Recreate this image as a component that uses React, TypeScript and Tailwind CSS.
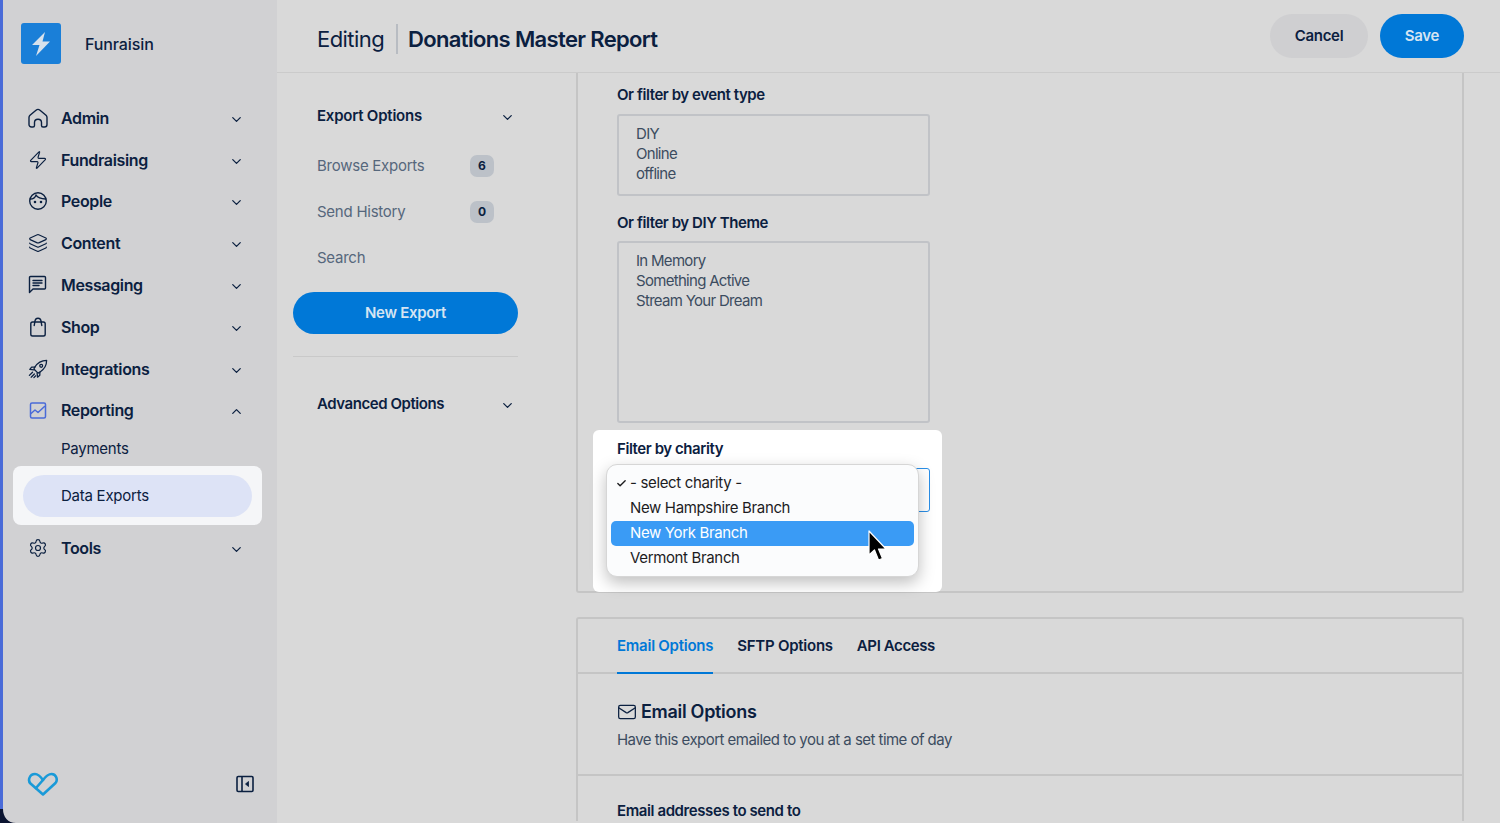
import { Check, ChevronDown, ChevronUp, Layers, Mail, Settings, Zap } from "lucide-react";
import type { ReactNode } from "react";

const HomeIcon = () => (
  <svg width="20" height="20" viewBox="0 0 20 20" fill="none" stroke="currentColor" strokeWidth="1.4" strokeLinejoin="round">
    <path d="M1 9.5C1 8.6 1.4 7.9 2 7.3L8 2.2C9.2 1.2 10.8 1.2 12 2.2L18 7.3C18.6 7.9 19 8.6 19 9.5V16.5C19 18 18 19 16.5 19H15C14 19 13.5 18.4 13.5 17.5V14.5C13.5 12.6 12 11.2 10 11.2C8 11.2 6.5 12.6 6.5 14.5V17.5C6.5 18.4 6 19 5 19H3.5C2 19 1 18 1 16.5V9.5Z" />
  </svg>
);

const FaceIcon = () => (
  <svg width="20" height="20" viewBox="0 0 20 20" fill="none" stroke="currentColor" strokeWidth="1.4" strokeLinecap="round">
    <circle cx="10" cy="10" r="8.3" />
    <path d="M2.4 8C5 8 7 6.8 8 4.2C9.5 6.5 12.5 8 17.6 8" />
    <circle cx="7" cy="11" r="0.6" fill="currentColor" />
    <circle cx="13" cy="11" r="0.6" fill="currentColor" />
  </svg>
);

const MessageIcon = () => (
  <svg width="20" height="20" viewBox="0 0 20 20" fill="none" stroke="currentColor" strokeWidth="1.4" strokeLinejoin="round" strokeLinecap="round">
    <path d="M1.5 2.5C1.5 1.9 1.9 1.5 2.5 1.5H16.5C17.1 1.5 17.5 1.9 17.5 2.5V13C17.5 13.6 17.1 14 16.5 14H5L1.5 17.5V2.5Z" />
    <path d="M5 5.5H14M5 8H14M5 10.5H11" />
  </svg>
);

const BagIcon = () => (
  <svg width="20" height="20" viewBox="0 0 20 20" fill="none" stroke="currentColor" strokeWidth="1.4" strokeLinecap="round">
    <rect x="2.8" y="5" width="14.4" height="14" rx="1.8" />
    <path d="M6.2 8.5C6.2 8 6.6 7 6.8 5C7 2.8 8.2 1.2 10 1.2C11.8 1.2 13 2.8 13.2 5C13.4 7 13.8 8 13.8 8.5" />
  </svg>
);

const RocketIcon = () => (
  <svg width="22" height="22" viewBox="0 0 22 22" fill="none" stroke="currentColor" strokeWidth="1.4" strokeLinecap="round" strokeLinejoin="round">
    <path d="M20.5 1.5C15 1.5 10.5 4 7.5 9L6.5 11L11 15.5L13 14.5C18 11.5 20.5 7 20.5 1.5Z" />
    <circle cx="14.5" cy="7.5" r="1.6" />
    <path d="M7.5 9H4L2 11.5L6.5 12" />
    <path d="M13 14.5V18L10.5 20L10 15.5" />
    <path d="M5 14.5L1.5 18M7 16.5L3.5 20M8.5 18.5L6.5 20.5" />
  </svg>
);

const ChartIcon = () => (
  <svg width="20" height="20" viewBox="0 0 20 20" fill="none" stroke="currentColor" strokeWidth="1.5" strokeLinejoin="round" strokeLinecap="round">
    <rect x="2.5" y="3" width="15" height="15" rx="1.5" />
    <path d="M3 13.5L7 10L10 12.5L16.5 6.5" />
  </svg>
);

function NavRow({ icon, label, open, active }: { icon: ReactNode; label: string; open?: boolean; active?: boolean }) {
  return (
    <div className="flex h-[41.8px] items-center pl-[28px] pr-[33px] text-[#0b2040]">
      <span className={`flex w-[20px] justify-center ${active ? "text-[#4a6bd8]" : ""}`}>{icon}</span>
      <span className="ml-[13px] flex-1 text-[16px] font-semibold tracking-[-0.36px]">{label}</span>
      <span className="mt-[3px]">{open ? <ChevronUp size={15} /> : <ChevronDown size={15} />}</span>
    </div>
  );
}

function Sidebar() {
  return (
    <aside className="relative flex h-full w-[277px] shrink-0 flex-col border-l-[3px] border-[#4a6bd8] bg-[#d1d1d3]">
      <div className="flex h-[97px] items-start pl-[18px] pt-[23px]">
        <div className="flex h-[41px] w-[40px] items-center justify-center rounded-[3px] bg-[#1a7fd8]">
          <svg width="22" height="26" viewBox="0 0 22 26" fill="#d8e2ec">
            <path d="M15 1L2 14H9.5L6 25L20 10.5H12.5L15 1Z" />
          </svg>
        </div>
        <span className="ml-[24px] mt-[9px] text-[16px] font-medium tracking-[-0.1px] text-[#0b2040]">Funraisin</span>
      </div>

      <nav className="-ml-[3px]">
        <NavRow icon={<HomeIcon />} label="Admin" />
        <NavRow icon={<Zap size={22} strokeWidth={1.4} />} label="Fundraising" />
        <NavRow icon={<FaceIcon />} label="People" />
        <NavRow icon={<Layers size={22} strokeWidth={1.4} />} label="Content" />
        <NavRow icon={<MessageIcon />} label="Messaging" />
        <NavRow icon={<BagIcon />} label="Shop" />
        <NavRow icon={<RocketIcon />} label="Integrations" />
        <NavRow icon={<ChartIcon />} label="Reporting" open active />
        <div className="flex h-[35px] items-center pl-[61px] text-[15px] tracking-[-0.25px] text-[#0b2040]">Payments</div>
        <div className="mx-[13px] flex h-[59px] w-[249px] items-center rounded-[8px] bg-[#f5f6f8] px-[10px]">
          <div className="flex h-[42px] flex-1 items-center rounded-full bg-[#dde3f6] pl-[38px] text-[15px] tracking-[-0.25px] text-[#0b2040]">
            Data Exports
          </div>
        </div>
        <div className="mt-[2px]">
          <NavRow icon={<Settings size={22} strokeWidth={1.4} />} label="Tools" />
        </div>
      </nav>

      <div className="mt-auto flex items-center justify-between pb-[26px] pl-[24px] pr-[23px]">
        <svg width="32" height="26" viewBox="0 0 32 26" fill="none" stroke="#1a9ad8" strokeWidth="2.6" strokeLinejoin="round" strokeLinecap="round">
          <path d="M16 23.5L3.5 12.5C0.5 9.5 2.5 3 8 3C11.5 3 13.5 5.5 16 9C19 5 21 3 24.5 3C29.5 3 31 9 28.5 12L16 23.5Z" />
          <path d="M16 9L9 17" />
        </svg>
        <svg width="18" height="18" viewBox="0 0 18 18" fill="none" stroke="#0b2040" strokeWidth="1.6">
          <rect x="1" y="1.5" width="16" height="15" rx="1.2" />
          <path d="M6 1.5V16.5" />
          <path d="M12.5 6.5V11.5L9.5 9Z" fill="#0b2040" strokeWidth="0.8" />
        </svg>
      </div>
      <svg className="absolute bottom-0 -left-[3px]" width="16" height="14" viewBox="0 0 16 14" fill="#0b1430">
        <path d="M0 0H3C3 8 8 14 16 14H0V0Z" />
      </svg>
    </aside>
  );
}

function Header() {
  return (
    <header className="flex h-[73px] shrink-0 items-center border-b border-[#cbcbcb] pl-[40px] pr-[36px]">
      <div className="mt-[6px] flex items-center">
        <span className="text-[22px] tracking-[-0.57px] text-[#0b2040]">Editing</span>
        <span className="ml-[12px] h-[30px] w-[2px] bg-[#b8bcc2]" />
        <span className="ml-[10px] text-[22px] font-semibold tracking-[-0.65px] text-[#0b2040]">Donations Master Report</span>
      </div>
      <div className="ml-auto flex gap-[12px]">
        <button className="h-[44px] w-[98px] rounded-full bg-[#cfcfd1] text-[15px] font-semibold tracking-[-0.3px] text-[#0b2040]">Cancel</button>
        <button className="h-[44px] w-[84px] rounded-full bg-[#0078d7] text-[15px] font-semibold tracking-[-0.3px] text-[#d5e4f2]">Save</button>
      </div>
    </header>
  );
}

function SubItem({ label, count }: { label: string; count?: string }) {
  return (
    <div className="flex h-[46px] items-center justify-between pl-[40px] pr-[82px] text-[15px] tracking-[-0.25px] text-[#56677c]">
      {label}
      {count && (
        <span className="flex h-[22px] w-[24px] items-center justify-center rounded-[7px] bg-[#bcc1c8] text-[12px] font-bold tracking-normal text-[#0b2040]">
          {count}
        </span>
      )}
    </div>
  );
}

function SubNav() {
  return (
    <div className="w-[299px] shrink-0 pt-[32px]">
      <div className="flex h-[22px] items-center justify-between pl-[40px] pr-[61px] text-[15px] font-semibold tracking-[-0.22px] text-[#0b2040]">
        Export Options
        <ChevronDown className="mt-[3px]" size={15} />
      </div>
      <div className="mt-[16px]">
        <SubItem label="Browse Exports" count="6" />
        <SubItem label="Send History" count="0" />
        <SubItem label="Search" />
      </div>
      <div className="mx-[16px] mt-[11px] flex h-[42px] w-[225px] items-center justify-center rounded-full bg-[#0078d7] text-[15px] font-semibold tracking-[-0.3px] text-[#d5e4f2]">
        New Export
      </div>
      <div className="mx-[16px] mt-[22px] h-px w-[225px] bg-[#c9c9c9]" />
      <div className="mt-[36px] flex h-[22px] items-center justify-between pl-[40px] pr-[61px] text-[15px] font-semibold tracking-[-0.44px] text-[#0b2040]">
        Advanced Options
        <ChevronDown className="mt-[3px]" size={15} />
      </div>
    </div>
  );
}

function ListBox({ items, className }: { items: string[]; className: string }) {
  return (
    <div className={`w-[313px] rounded-[3px] border-2 border-[#c1c3c7] px-[17px] py-[8px] text-[15px] leading-[20px] tracking-[-0.7px] text-[#3c4c60] ${className}`}>
      {items.map((item) => (
        <div key={item}>{item}</div>
      ))}
    </div>
  );
}

function CharityMenu() {
  const options = ["- select charity -", "New Hampshire Branch", "New York Branch", "Vermont Branch"];
  return (
    <div className="absolute -left-[12px] -top-[5px] w-[313px] rounded-[11px] border border-[#d6d6d6] bg-[#fbfcfd] px-[4px] py-[5.5px] shadow-[0_6px_16px_rgba(0,0,0,0.25)]">
      {options.map((option, i) => (
        <div
          key={option}
          className={`relative flex h-[25px] items-center rounded-[5px] pl-[19px] text-[15px] tracking-[-0.35px] text-[#1d1d1f] ${i === 2 ? "bg-[#3a9bf5] text-white" : ""}`}
        >
          {i === 0 && <Check className="absolute left-[5px]" size={11} strokeWidth={3} />}
          {option}
        </div>
      ))}
      <svg className="absolute left-[260px] top-[65px]" width="22" height="33" viewBox="0 0 22 33">
        <path d="M2 1V25L7.5 20L11.5 30L15.5 28.5L11.5 19H19L2 1Z" fill="#000" stroke="#fff" strokeWidth="1.2" strokeLinejoin="round" />
      </svg>
    </div>
  );
}

function FilterCard() {
  return (
    <section className="relative h-[520px] rounded-b-[3px] border-x-2 border-b-2 border-[#c5c5c5] pl-[39px] pt-[12px]">
      <h3 className="text-[15px] font-semibold leading-[20px] tracking-[-0.43px] text-[#0b2040]">Or filter by event type</h3>
      <ListBox items={["DIY", "Online", "offline"]} className="mt-[9px] h-[82px]" />
      <h3 className="mt-[17px] text-[15px] font-semibold leading-[20px] tracking-[-0.43px] text-[#0b2040]">Or filter by DIY Theme</h3>
      <ListBox items={["In Memory", "Something Active", "Stream Your Dream"]} className="mt-[8px] h-[182px]" />
      <div className="-ml-[24px] mt-[7px] h-[162px] w-[349px] rounded-[6px] bg-white pl-[24px] pt-[9px]">
        <div className="text-[15px] font-semibold leading-[20px] tracking-[-0.43px] text-[#0b2040]">Filter by charity</div>
        <div className="relative mt-[9px] h-[44px] w-[313px] rounded-[3px] border border-[#2a8fe8]">
          <CharityMenu />
        </div>
      </div>
    </section>
  );
}

function EmailCard() {
  return (
    <section className="mt-[24px] rounded-t-[3px] border-x-2 border-t-2 border-[#c5c5c5]">
      <div className="flex h-[55px] gap-[24px] border-b-2 border-[#c5c5c5] pl-[39px] text-[15px] font-semibold tracking-[-0.25px]">
        <div className="-mb-[2px] flex h-[55px] items-center border-b-2 border-[#0078d7] pt-[2px] text-[#0078d7]">Email Options</div>
        <div className="flex items-center pt-[2px] text-[#0b2040]">SFTP Options</div>
        <div className="flex items-center pt-[2px] tracking-[-0.4px] text-[#0b2040]">API Access</div>
      </div>
      <div className="h-[102px] border-b-2 border-[#c5c5c5] pl-[39px] pt-[26px]">
        <div className="flex items-center gap-[4px] text-[18px] font-semibold leading-[24px] tracking-[-0.3px] text-[#0b2040]">
          <Mail size={20} strokeWidth={1.5} />
          Email Options
        </div>
        <p className="mt-[5px] text-[15px] leading-[22px] tracking-[-0.54px] text-[#3c4c60]">Have this export emailed to you at a set time of day</p>
      </div>
      <div className="pl-[39px] pt-[25px] text-[15px] font-semibold leading-[20px] tracking-[-0.4px] text-[#0b2040]">Email addresses to send to</div>
    </section>
  );
}

export default function App() {
  return (
    <div className="flex h-[823px] w-[1500px] overflow-hidden bg-[#d9d9d9] font-['Inter',sans-serif]">
      <Sidebar />
      <main className="flex min-w-0 flex-1 flex-col">
        <Header />
        <div className="flex min-h-0 flex-1">
          <SubNav />
          <div className="min-w-0 flex-1 pr-[36px]">
            <FilterCard />
            <EmailCard />
          </div>
        </div>
      </main>
    </div>
  );
}
